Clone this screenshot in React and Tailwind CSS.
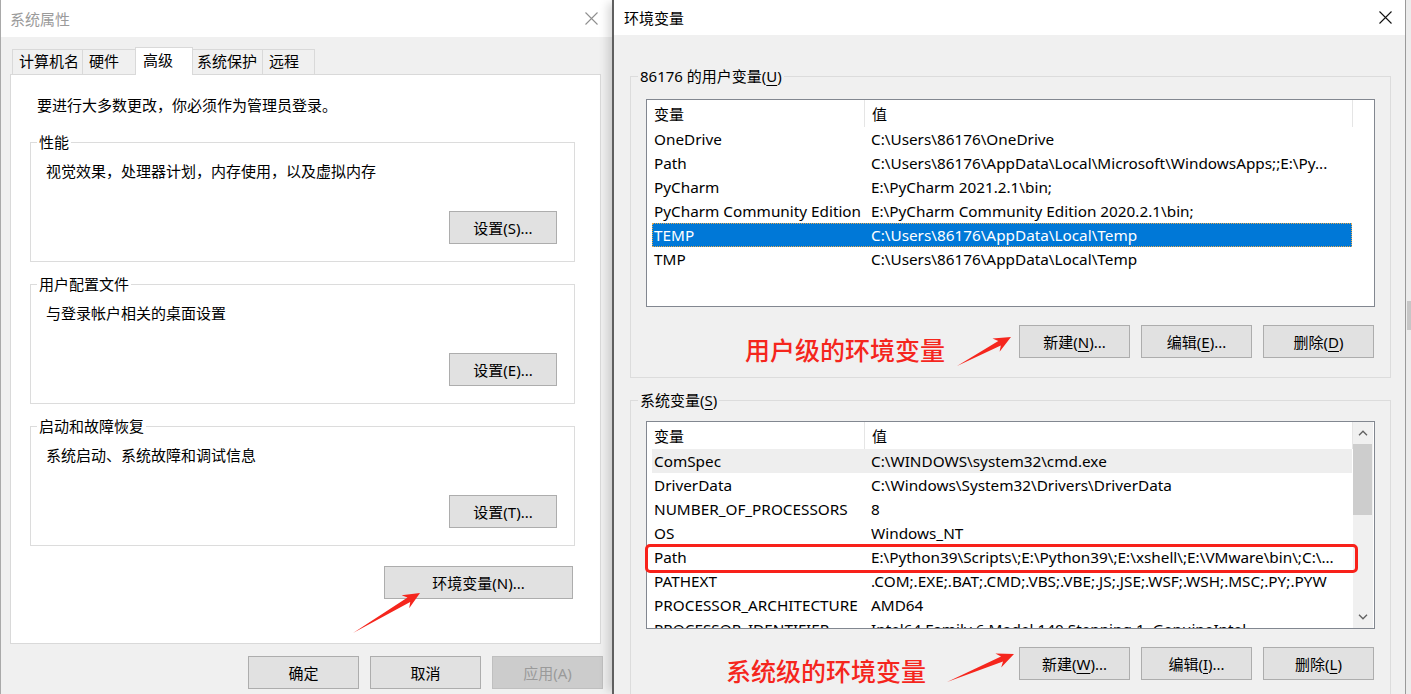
import React from "react";

const RED = "#f5261d";

function CloseX({ color }) {
  return (
    <svg width="13" height="13" viewBox="0 0 13 13">
      <path d="M0.5 0.5 L12.5 12.5 M12.5 0.5 L0.5 12.5" stroke={color} strokeWidth="1.1" fill="none" />
    </svg>
  );
}

function Btn({ children, className = "", disabled = false }) {
  return (
    <div
      className={`flex items-center justify-center h-[33px] border text-[15px] leading-[20px] ${
        disabled ? "bg-[#cccccc] border-[#bfbfbf] text-[#9a9a9a]" : "bg-[#e1e1e1] border-[#adadad] text-black"
      } ${className}`}
    >
      {children}
    </div>
  );
}

function U({ children }) {
  return <span className="underline underline-offset-[3px] decoration-1">{children}</span>;
}

function Chevron({ up }) {
  return (
    <svg width="10" height="6" viewBox="0 0 10 6">
      <path
        d={up ? "M1 5.2 L5 1.2 L9 5.2" : "M1 0.8 L5 4.8 L9 0.8"}
        stroke="#606060"
        strokeWidth="1.3"
        fill="none"
      />
    </svg>
  );
}

function arrowPoints(x1, y1, x2, y2) {
  const dx = x2 - x1;
  const dy = y2 - y1;
  const L = Math.hypot(dx, dy);
  const ux = dx / L;
  const uy = dy / L;
  const nx = -uy;
  const ny = ux;
  const p = (back, side) => [x2 - ux * back + nx * side, y2 - uy * back + ny * side];
  const pts = [
    [x1, y1],
    p(13, 2.6),
    p(17, 7.5),
    [x2, y2],
    p(17, -7.5),
    p(13, -2.6),
  ];
  return pts.map((q) => q[0].toFixed(1) + "," + q[1].toFixed(1)).join(" ");
}

function LeftDialog() {
  const groups = [
    ["性能", "视觉效果，处理器计划，内存使用，以及虚拟内存", "设置(S)..."],
    ["用户配置文件", "与登录帐户相关的桌面设置", "设置(E)..."],
    ["启动和故障恢复", "系统启动、系统故障和调试信息", "设置(T)..."],
  ];
  return (
    <div className="w-[612px] h-full shrink-0 flex flex-col border-l border-[#a9a9a9] bg-[#f0f0f0]">
      <div className="h-[37px] shrink-0 bg-white flex items-center justify-between pl-[9px] pr-[14px]">
        <span className="text-[#9b9b9b]">系统属性</span>
        <CloseX color="#8f8f8f" />
      </div>
      <div className="mt-[10px] pl-[11px] flex items-end h-[28px] relative z-10 -mb-px">
        <div className="w-[71px] h-[25px] mb-px bg-[#f0f0f0] border-t border-l border-r border-[#d9d9d9] pl-[6px] pt-px">计算机名</div>
        <div className="w-[53px] h-[25px] mb-px bg-[#f0f0f0] border-t border-r border-[#d9d9d9] pl-[6px] pt-px">硬件</div>
        <div className="w-[58px] h-[28px] -ml-px bg-white border-t border-l border-r border-[#d9d9d9] pl-[7px] pt-[2px]">高级</div>
        <div className="w-[70px] h-[25px] mb-px bg-[#f0f0f0] border-t border-r border-[#d9d9d9] pl-[4px] pt-px">系统保护</div>
        <div className="w-[52px] h-[25px] mb-px bg-[#f0f0f0] border-t border-r border-[#d9d9d9] pl-[6px] pt-px">远程</div>
      </div>
      <div className="ml-[9px] w-[591px] h-[570px] shrink-0 bg-white border border-[#d9d9d9] flex flex-col">
        <div className="mt-[20px] ml-[26px]">要进行大多数更改，你必须作为管理员登录。</div>
        {groups.map((g, i) => (
          <fieldset
            key={g[0]}
            className={`${i === 0 ? "mt-[17px]" : "mt-[12px]"} ml-[19px] w-[545px] border border-[#dcdcdc]`}
          >
            <legend className="ml-[6px] px-[2px] leading-[20px]">{g[0]}</legend>
            <div className="flex flex-col">
              <div className="mt-[9px] pl-[15px]">{g[1]}</div>
              <Btn className="mt-[30px] self-end mr-[17px] w-[108px]">{g[2]}</Btn>
              <div className="h-[17px]" />
            </div>
          </fieldset>
        ))}
        <Btn className="mt-[20px] self-end mr-[27px] w-[189px]">环境变量(N)...</Btn>
      </div>
      <div className="mt-[12px] flex justify-end gap-[11px] pr-[9px]">
        <Btn className="w-[111px]">确定</Btn>
        <Btn className="w-[111px]">取消</Btn>
        <Btn disabled className="w-[111px]">应用(A)</Btn>
      </div>
    </div>
  );
}

function Row({ name, value, variant }) {
  const cls =
    variant === "sel"
      ? "bg-[#0078d7] text-white outline outline-1 outline-dotted outline-[#e6a94f] -outline-offset-1"
      : variant === "hover"
      ? "bg-[#eeeeee]"
      : "";
  return (
    <div className={`flex h-[24px] items-center ml-[5px] w-[700px] shrink-0 text-[15.3px] ${cls}`}>
      <div className="w-[219px] shrink-0 pl-[2px] whitespace-nowrap overflow-hidden">{name}</div>
      <div className="flex-1 whitespace-nowrap overflow-hidden">{value}</div>
    </div>
  );
}

function Header({ filler, tall }) {
  return (
    <div className={`flex ${tall ? "h-[27px]" : "h-[27px]"} shrink-0 items-stretch bg-white`}>
      <div className="w-[218px] shrink-0 border-r border-[#e5e5e5] pl-[7px] flex items-center">变量</div>
      <div className="w-[488px] shrink-0 border-r border-[#e5e5e5] pl-[7px] flex items-center">值</div>
      {filler ? <div className="flex-1" /> : null}
    </div>
  );
}

function RightDialog() {
  const userRows = [
    ["OneDrive", "C:\\Users\\86176\\OneDrive"],
    ["Path", "C:\\Users\\86176\\AppData\\Local\\Microsoft\\WindowsApps;;E:\\Py..."],
    ["PyCharm", "E:\\PyCharm 2021.2.1\\bin;"],
    ["PyCharm Community Edition", "E:\\PyCharm Community Edition 2020.2.1\\bin;"],
    ["TEMP", "C:\\Users\\86176\\AppData\\Local\\Temp", "sel"],
    ["TMP", "C:\\Users\\86176\\AppData\\Local\\Temp"],
  ];
  const sysRows = [
    ["ComSpec", "C:\\WINDOWS\\system32\\cmd.exe", "hover"],
    ["DriverData", "C:\\Windows\\System32\\Drivers\\DriverData"],
    ["NUMBER_OF_PROCESSORS", "8"],
    ["OS", "Windows_NT"],
    ["Path", "E:\\Python39\\Scripts\\;E:\\Python39\\;E:\\xshell\\;E:\\VMware\\bin\\;C:\\..."],
    ["PATHEXT", ".COM;.EXE;.BAT;.CMD;.VBS;.VBE;.JS;.JSE;.WSF;.WSH;.MSC;.PY;.PYW"],
    ["PROCESSOR_ARCHITECTURE", "AMD64"],
    ["PROCESSOR_IDENTIFIER", "Intel64 Family 6 Model 140 Stepping 1, GenuineIntel"],
  ];
  return (
    <div className="w-[794px] h-full shrink-0 flex flex-col bg-[#f0f0f0] border-l-2 border-r border-l-[#5f5f5f] border-r-[#9a9a9a] relative z-10 shadow-[-7px_0_9px_-3px_rgba(0,0,0,0.16)]">
      <div className="h-[35px] shrink-0 bg-white flex items-center justify-between pl-[10px] pr-[13px]">
        <span>环境变量</span>
        <CloseX color="#111111" />
      </div>

      <fieldset className="mt-[31px] ml-[16px] w-[761px] border border-[#dcdcdc]">
        <legend className="ml-[7px] px-[2px] leading-[20px]">
          86176 的用户变量(<U>U</U>)
        </legend>
        <div className="flex flex-col">
          <div className="mt-[13px] ml-[15px] w-[729px] h-[208px] border border-[#828790] bg-white overflow-hidden flex flex-col">
            <Header filler tall />
            {userRows.map((r) => (
              <Row key={r[0]} name={r[0]} value={r[1]} variant={r[2]} />
            ))}
          </div>
          <div className="mt-[18px] flex justify-end gap-[11px] pr-[16px]">
            <Btn className="w-[111px]">新建(<U>N</U>)...</Btn>
            <Btn className="w-[111px]">编辑(<U>E</U>)...</Btn>
            <Btn className="w-[111px]">删除(<U>D</U>)</Btn>
          </div>
          <div className="h-[19px]" />
        </div>
      </fieldset>

      <fieldset className="mt-[12px] ml-[16px] w-[761px] border border-[#dcdcdc]">
        <legend className="ml-[7px] px-[2px] leading-[20px]">
          系统变量(<U>S</U>)
        </legend>
        <div className="flex flex-col">
          <div className="mt-[11px] ml-[15px] w-[729px] relative">
            <div className="h-[208px] border border-[#828790] bg-white overflow-hidden flex">
              <div className="w-[706px] shrink-0 flex flex-col">
                <Header />
                {sysRows.map((r) => (
                  <Row key={r[0]} name={r[0]} value={r[1]} variant={r[2]} />
                ))}
              </div>
              <div className="w-[20px] shrink-0 bg-[#f0f0f0] flex flex-col">
                <div className="h-[22px] flex items-center justify-center">
                  <Chevron up />
                </div>
                <div className="w-[19px] h-[71px] bg-[#cdcdcd]" />
                <div className="flex-1" />
                <div className="h-[22px] flex items-center justify-center">
                  <Chevron />
                </div>
              </div>
            </div>
            <div className="absolute left-[-1px] top-[123px] w-[713px] h-[29px] border-[3px] border-[#f8211a] rounded-[5px]" />
          </div>
          <div className="mt-[18px] flex justify-end gap-[11px] pr-[16px]">
            <Btn className="w-[111px]">新建(<U>W</U>)...</Btn>
            <Btn className="w-[111px]">编辑(<U>I</U>)...</Btn>
            <Btn className="w-[111px]">删除(<U>L</U>)</Btn>
          </div>
          <div className="h-[19px]" />
        </div>
      </fieldset>
    </div>
  );
}

export default function App() {
  return (
    <div className="relative w-[1411px] h-[694px] overflow-hidden flex bg-[#f0f0f0] text-black text-[15px] leading-[20px] font-['Noto_Sans','Noto_Sans_CJK_SC',sans-serif]">
      <LeftDialog />
      <RightDialog />
      <div className="flex-1 bg-[#ececec] flex flex-col">
        <div className="mt-[301px] ml-[1px] h-[29px] bg-[#c6c6c6]" />
      </div>

      <div className="absolute z-20 left-[745px] top-[334px] text-[25px] leading-[30px] font-medium text-[#f5261d] font-['Noto_Sans_CJK_SC',sans-serif] whitespace-nowrap">
        用户级的环境变量
      </div>
      <div className="absolute z-20 left-[726px] top-[655px] text-[25px] leading-[30px] font-medium text-[#f5261d] font-['Noto_Sans_CJK_SC',sans-serif] whitespace-nowrap">
        系统级的环境变量
      </div>

      <svg className="absolute z-20 inset-0 pointer-events-none" width="1411" height="694" viewBox="0 0 1411 694">
        <polygon points={arrowPoints(353, 633, 420, 593)} fill={RED} />
        <polygon points={arrowPoints(957, 366, 1011, 337)} fill={RED} />
        <polygon points={arrowPoints(947, 682, 1014, 654)} fill={RED} />
      </svg>
    </div>
  );
}
